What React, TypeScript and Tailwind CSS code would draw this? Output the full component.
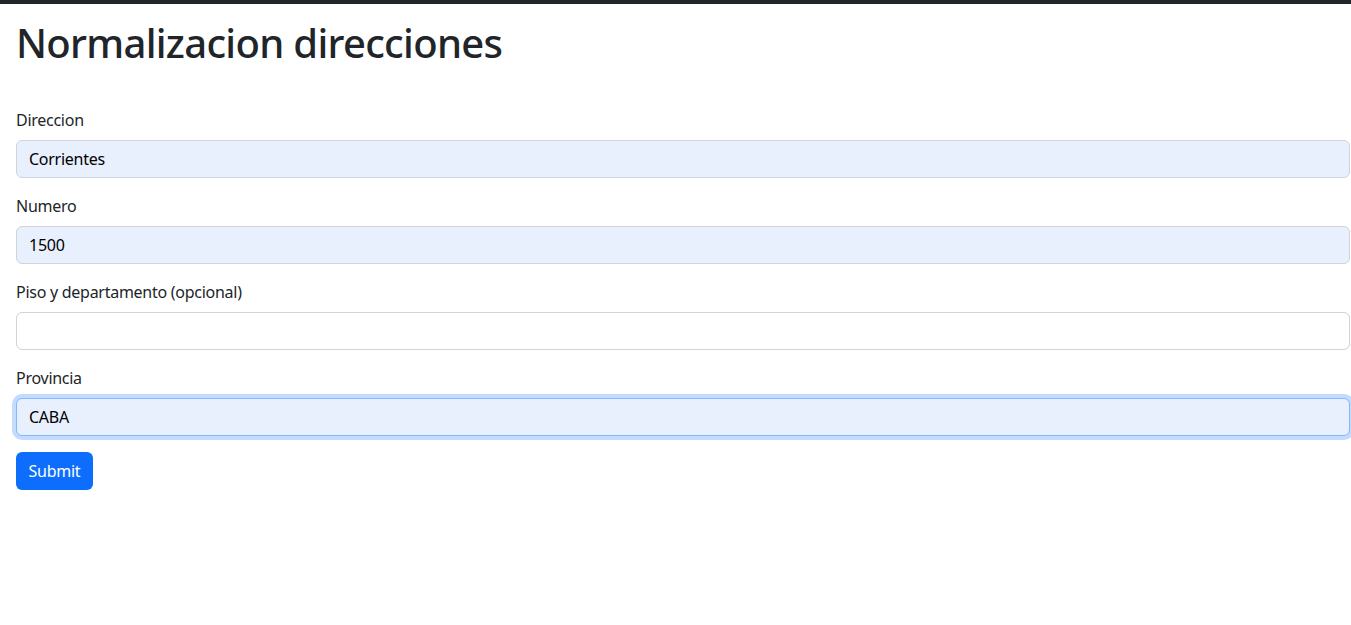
import React from "react";

const font = { fontFamily: '"Noto Sans", "Liberation Sans", sans-serif' };

function Field({ label, value, autofill, focused }: { label: string; value: string; autofill?: boolean; focused?: boolean }) {
  return (
    <div className="mb-4">
      <label className="mb-2 block text-[16px] leading-6 tracking-[-0.27px] text-[#212529]">{label}</label>
      <input
        readOnly
        value={value}
        className={
          "block h-[38px] w-full rounded-[6px] border px-3 text-[16px] leading-6 tracking-[-0.27px] text-black outline-none " +
          (autofill ? "bg-[#e8f0fe] " : "bg-white ") +
          (focused ? "border-[#86b7fe] shadow-[0_0_0_4px_rgba(13,110,253,0.25)]" : "border-[#ced4da]")
        }
        style={font}
      />
    </div>
  );
}

export default function App() {
  return (
    <div className="min-h-[625px] bg-white" style={font}>
      <div className="h-1 bg-[#212529]" />
      <div className="pl-4 pr-px">
        <h1 className="mt-[15px] mb-[41px] text-[40px] font-medium leading-[48px] tracking-[-0.7px] text-[#212529]">Normalizacion direcciones</h1>
        <form>
          <Field label="Direccion" value="Corrientes" autofill />
          <Field label="Numero" value="1500" autofill />
          <Field label="Piso y departamento (opcional)" value="" />
          <Field label="Provincia" value="CABA" autofill focused />
          <button type="button" className="h-[38px] w-[77px] rounded-[6px] bg-[#0d6efd] text-[16px] leading-6 tracking-[-0.27px] text-white">
            Submit
          </button>
        </form>
      </div>
    </div>
  );
}
